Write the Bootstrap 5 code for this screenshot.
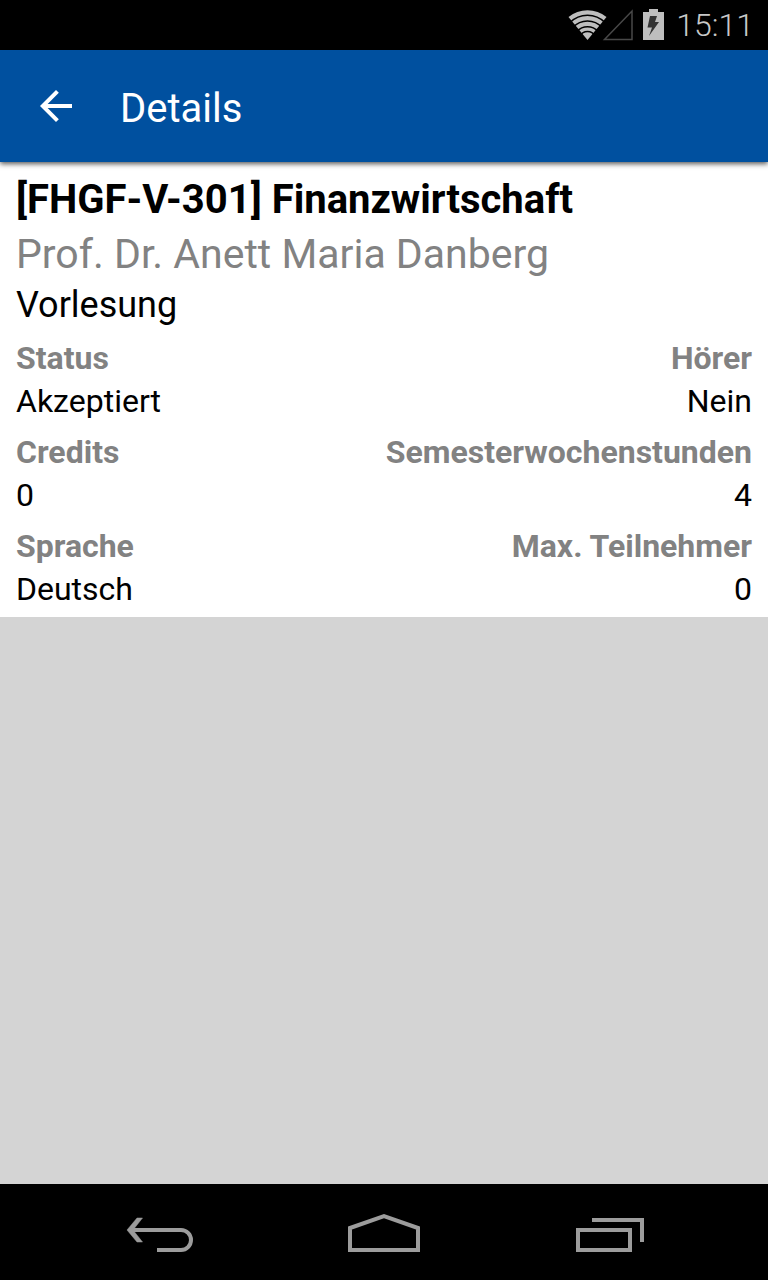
<!DOCTYPE html>
<html lang="de">
<head>
<meta charset="utf-8">
<meta name="viewport" content="width=device-width, initial-scale=1">
<title>Details</title>
<link rel="stylesheet" href="https://cdn.jsdelivr.net/npm/bootstrap@5.3.0/dist/css/bootstrap.min.css">
<style>
body { font-family: Roboto, sans-serif; background: #d4d4d4; color: #000; }
.status-bar { height: 50px; background: #000; color: #c8c8c8; padding-right: 14px; }
.clock { font-size: 32px; line-height: 52px; font-weight: 300; margin-left: 12px; }
.battery { margin-left: 10px; }
.app-bar { height: 112px; background: #00509f; box-shadow: 0 2px 5px rgba(0,0,0,.65); z-index: 1; padding-left: 32px; gap: 40px; }
.app-bar h1 { font-size: 40px; line-height: 48px; padding-top: 6px; }
.course { font-size: 32px; padding: 11px 16px 6px; }
.course h2, .lecturer { font-size: 40px; line-height: 54px; }
.course .lecturer { font-size: 41px; }
.lecturer, .course dt { color: #828282; }
.kind { font-size: 36px; line-height: 48px; }
.course dt, .course dd { line-height: 43px; }
.nav-keys { height: 96px; background: #000; color: #9c9c9c; }
</style>
</head>
<body class="d-flex flex-column min-vh-100">
<div class="status-bar d-flex align-items-center justify-content-end">
<svg width="65" height="32" viewBox="0 0 65 32" aria-hidden="true">
<path d="M19.500 31 .5 8A30 30 0 0 1 38.500 8Z" fill="#bebebe"/>
<path d="M2 13.500A24.500 24.500 0 0 1 37 13.500M5 18.500A19.500 19.500 0 0 1 34 18.500M9 22.500A14 14 0 0 1 30 22.500M12 27A8.500 8.500 0 0 1 27 27" fill="none" stroke="#000" stroke-width="1.500"/>
<path d="M36.500 30.500H64V2Z" fill="none" stroke="#484848" stroke-width="1.500"/>
</svg>
<svg class="battery" width="21" height="32" viewBox="0 0 21 32" aria-hidden="true">
<path d="M6 0h9v3h6v28H0V3h6Z" fill="#bebebe"/>
<path d="M7 7h7l-2 6h4L6 27l3-8.500H4.500Z" fill="#333"/>
</svg>
<span class="clock">15:11</span>
</div>
<header class="app-bar d-flex align-items-center position-relative text-white">
<a class="text-white d-flex" href="#" aria-label="Zurück">
<svg width="48" height="48" viewBox="0 0 24 24" fill="currentColor" aria-hidden="true"><path d="M20 11H7.830l5.590-5.590L12 4l-8 8 8 8 1.410-1.410L7.830 13H20z"/></svg>
</a>
<h1 class="fw-normal mb-0">Details</h1>
</header>
<main class="flex-grow-1">
<section class="course bg-white">
<h2 class="fw-bold mb-0">[FHGF-V-301] Finanzwirtschaft</h2>
<p class="lecturer mb-0">Prof. Dr. Anett Maria Danberg</p>
<p class="kind mb-0">Vorlesung</p>
<dl class="d-flex justify-content-between mt-2 mb-0">
<div><dt>Status</dt><dd class="mb-0">Akzeptiert</dd></div>
<div class="text-end"><dt>Hörer</dt><dd class="mb-0">Nein</dd></div>
</dl>
<dl class="d-flex justify-content-between mt-2 mb-0">
<div><dt>Credits</dt><dd class="mb-0">0</dd></div>
<div class="text-end"><dt>Semesterwochenstunden</dt><dd class="mb-0">4</dd></div>
</dl>
<dl class="d-flex justify-content-between mt-2 mb-0">
<div><dt>Sprache</dt><dd class="mb-0">Deutsch</dd></div>
<div class="text-end"><dt>Max. Teilnehmer</dt><dd class="mb-0">0</dd></div>
</dl>
</section>
</main>
<nav class="nav-keys d-flex px-5" aria-label="System">
<button type="button" class="btn border-0 rounded-0 p-0 text-reset flex-fill w-100" aria-label="Zurück">
<svg width="72" height="48" viewBox="0 0 72 48" fill="none" stroke="currentColor" stroke-width="4" aria-hidden="true"><path d="M7 22H57a10 10 0 0 1 0 20H33"/><path d="M18.500 10h-5.500L3 22l10 12h5.500L9 22Z" fill="currentColor" stroke="currentColor" stroke-width=".5"/></svg>
</button>
<button type="button" class="btn border-0 rounded-0 p-0 text-reset flex-fill w-100" aria-label="Startseite">
<svg width="72" height="48" viewBox="0 0 72 48" fill="none" stroke="currentColor" stroke-width="4" aria-hidden="true"><path d="M2 42V20L36 8 70 20V42Z"/></svg>
</button>
<button type="button" class="btn border-0 rounded-0 p-0 text-reset flex-fill w-100" aria-label="Letzte Apps">
<svg width="72" height="48" viewBox="0 0 72 48" fill="none" stroke="currentColor" stroke-width="4" aria-hidden="true"><path d="M6 22H58V42H6ZM20 12H70V34"/></svg>
</button>
</nav>
<script src="https://cdn.jsdelivr.net/npm/bootstrap@5.3.0/dist/js/bootstrap.bundle.min.js"></script>
</body>
</html>
